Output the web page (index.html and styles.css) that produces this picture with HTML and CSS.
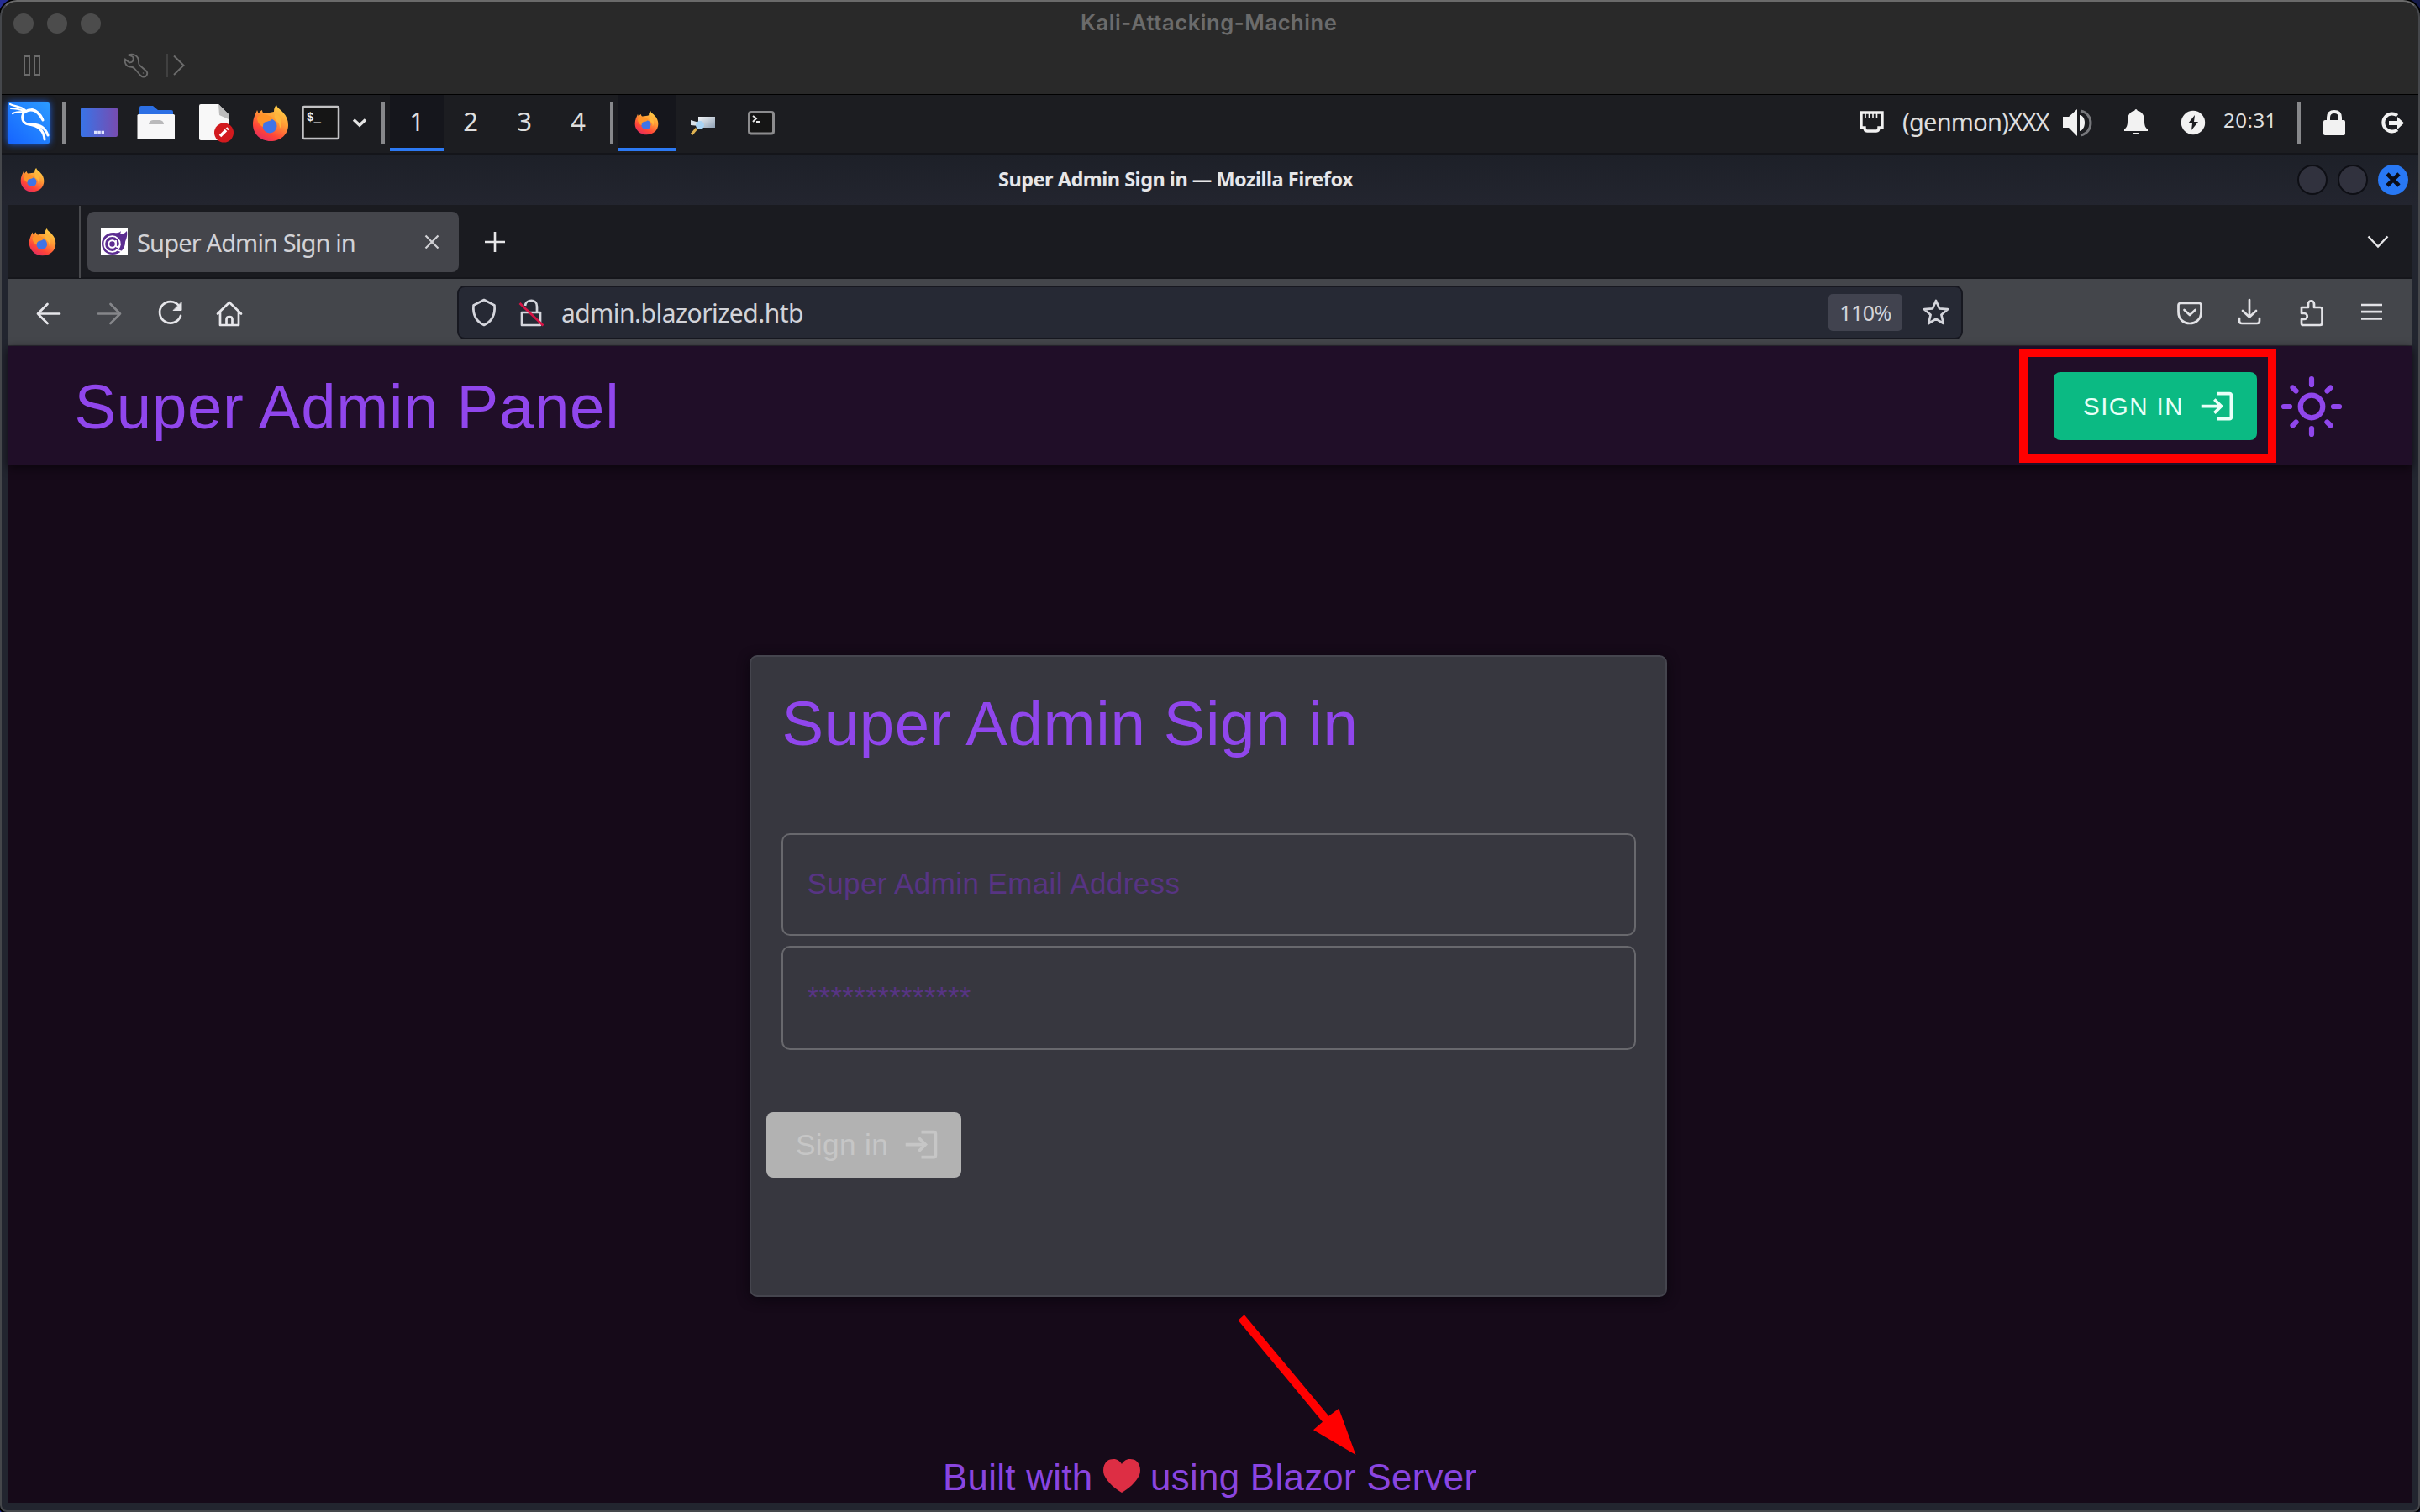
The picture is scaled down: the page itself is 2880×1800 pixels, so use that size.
FILE: index.html
```html
<!DOCTYPE html>
<html lang="en">
<head>
<meta charset="utf-8">
<title>Kali-Attacking-Machine</title>
<link rel="stylesheet" href="styles.css">
</head>
<body>
<svg class="defs" width="0" height="0" aria-hidden="true">
  <defs>
    <linearGradient id="ffBody" x1=".8" y1="0" x2=".25" y2="1">
      <stop offset="0" stop-color="#ffd84a"/><stop offset=".4" stop-color="#ff9a35"/><stop offset=".75" stop-color="#ff4438"/><stop offset="1" stop-color="#e02a63"/>
    </linearGradient>
    <linearGradient id="desk" x1="0" y1="0" x2="1" y2="0">
      <stop offset="0" stop-color="#3874e8"/><stop offset="1" stop-color="#774cb0"/>
    </linearGradient>
    <linearGradient id="kali" x1="0" y1="1" x2="1" y2="0">
      <stop offset="0" stop-color="#1664ff"/><stop offset="1" stop-color="#2b9bff"/>
    </linearGradient>
    <linearGradient id="cam" x1="0" y1="0" x2="1" y2="1">
      <stop offset="0" stop-color="#f2f5f8"/><stop offset="1" stop-color="#8fa1b5"/>
    </linearGradient>
    <symbol id="firefox" viewBox="0 0 44 44">
      <path fill="url(#ffBody)" d="M26 8C26 4 27 2 29 0c1 4 5 5 8 9 4 4 6 9 6 15 0 11-9 19-21 19S1 34 1 23C1 16 4 11 6 6c1 2 1 3 2 4 1-2 2-3 4-4 0 2 1 4 3 4 4-1 8-1 11-2z"/>
      <circle cx="21" cy="25" r="8.500" fill="#3f74e6"/>
      <path fill="#ff9428" d="M6 15c4-5 10-5 14-2l5 2c-2 4-5 4-8 5-3 0-4 3-4 6-4-2-7-6-7-11z"/>
      <path fill="#ffb73c" d="M28 9c7 5 9 12 5 19 0-4-1-7-4-9-3-3-3-7-1-10z"/>
    </symbol>
    <symbol id="login" viewBox="0 0 24 24">
      <path fill="currentColor" d="M11 7 9.600 8.400l2.600 2.600H2v2h10.200l-2.600 2.600L11 17l5-5zM20 19h-8v2h8c1.100 0 2-.9 2-2V5c0-1.100-.9-2-2-2h-8v2h8z"/>
    </symbol>
  </defs>
</svg>

<div class="window">
  <header class="mac">
    <div class="mac-title">
      <span class="dot"></span><span class="dot"></span><span class="dot"></span>
      <span class="mac-name">Kali-Attacking-Machine</span>
    </div>
    <svg class="mac-tools" width="240" height="54" viewBox="0 56 240 54" fill="none" stroke="#6b6b6b" stroke-width="2">
      <path d="M29 67h6v22h-6zM41 67h6v22h-6z"/>
      <path stroke-width="1.800" d="M153 65.500c5-2 12 0 12 8 0 2 0 3 1 4l8 7c3 3 0 8-4 7-1 0-2-1-3-2l-7-8c-2-2-3-2-5-2-5 0-7-5-6-9l5 4c4 0 6-3 4-7z"/>
      <circle cx="170.500" cy="87" r=".8" fill="#6b6b6b" stroke="none"/>
      <path stroke="#404040" d="M199 64v28"/>
      <path d="m207 66.500 11.500 11.200L207 89"/>
    </svg>
  </header>

  <nav class="panel">
    <svg class="logo" width="50" height="71" viewBox="9 113 50 71">
      <rect x="9" y="122" width="50" height="49" rx="2" fill="url(#kali)"/>
      <g fill="none" stroke="#fff" stroke-linecap="round">
        <path stroke-width="3" d="M30 133c8-5 15-1 21 10M29 133c-4 6-3 14 5 15 8 1 18 4 19 18M38 148c9 0 16 4 19 13"/>
        <path stroke-width="2.200" d="M12 124c6 3 12 2 18 7M13 129c5 0 10 1 16 3M15 135c4-2 8-2 13-2M38 130c6 1 10 5 13 12"/>
      </g>
    </svg>
    <span class="sep s1"></span>
    <svg class="i-desk" width="44" height="71" viewBox="96 113 44 71">
      <rect x="96" y="128" width="44" height="35" rx="2" fill="url(#desk)"/>
      <path d="M112 157.500h12" stroke="#dfe4ff" stroke-width="3.500" stroke-dasharray="3.500 .8"/>
    </svg>
    <svg class="i-folder" width="45" height="71" viewBox="163 113 45 71">
      <path fill="#2c6fe4" d="M166 139v-11q0-2 2-2h14l6 5h16q2 0 2 2v6z"/>
      <rect x="163.500" y="136" width="44.500" height="30" rx="1.500" fill="#f7f7f8"/>
      <path d="M177 148c1-5 3-5 9-5s8 0 9 5z" fill="#b9b9bb"/>
    </svg>
    <svg class="i-doc" width="42" height="71" viewBox="236 113 42 71">
      <path fill="#f8f8f8" d="M237 126q0-2 2-2h21l12 12v29q0 2-2 2h-31q-2 0-2-2z"/>
      <path fill="#bdbdbd" d="m260 124 12 12v6l-11-5z"/>
      <circle cx="266.500" cy="158" r="11.500" fill="#d21a1e"/>
      <path d="m262 162 7-7" stroke="#fff" stroke-width="3.600"/><path d="m270 154 1.500-1.500" stroke="#fff" stroke-width="3.600"/>
    </svg>
    <svg class="i-ff" width="44" height="71"><use href="#firefox" y="12" width="44" height="44"/></svg>
    <svg class="i-term" width="45" height="71" viewBox="359 113 45 71">
      <rect x="360.500" y="127" width="42.500" height="38" rx="1.500" fill="#151515" stroke="#c2c2c4" stroke-width="2.500"/>
      <text x="365" y="144" class="prompt">$_</text>
    </svg>
    <svg class="i-chev" width="18" height="71" viewBox="419 113 18 71"><path d="m421 142.500 7 6.500 7-6.500" fill="none" stroke="#e4e4e4" stroke-width="3.600"/></svg>
    <span class="sep s2"></span>
    <span class="ws active">1</span><span class="ws">2</span><span class="ws">3</span><span class="ws">4</span>
    <span class="sep s3"></span>
    <span class="task active"><svg width="30" height="71"><use href="#firefox" y="19" width="29" height="29"/></svg></span>
    <svg class="i-cam" width="34" height="71" viewBox="821 113 34 71">
      <rect x="831" y="139" width="20" height="13" fill="url(#cam)"/>
      <path fill="#d7e0e8" d="M822 143l10 3v4l-10-1z"/>
      <circle cx="833" cy="149" r="5" fill="#a9d3f4"/>
      <path d="m829 153-6 7" stroke="#e0b352" stroke-width="3.200"/>
    </svg>
    <svg class="i-term2" width="32" height="71" viewBox="890 113 32 71">
      <rect x="891.500" y="133.500" width="29" height="25.500" rx="2.500" fill="#151515" stroke="#8c8c8e" stroke-width="3"/>
      <path d="m896 138 4 3-4 4M900 145h5" fill="none" stroke="#e6e6e6" stroke-width="2"/>
    </svg>
    <svg class="i-eth" width="29" height="71" viewBox="2213 113 29 71">
      <path d="M2215 134h25v18h-4q0 4-3 4h-11q-3 0-3-4h-4z" fill="none" stroke="#f2f2f2" stroke-width="3.400"/>
      <path d="M2220 135v5M2224.500 135v5M2229 135v5M2233.500 135v5" stroke="#f2f2f2" stroke-width="1.600"/>
    </svg>
    <span class="genmon">(genmon)XXX</span>
    <svg class="i-vol" width="35" height="71" viewBox="2455 113 35 71">
      <path fill="#f2f2f2" d="M2455 139h7l10-9v32l-10-10h-7zM2475 137c8 1 8 17 0 19z"/>
      <path d="M2476 132c16 3 16 26 0 29" fill="none" stroke="#77787c" stroke-width="3"/>
    </svg>
    <svg class="i-bell" width="28" height="71" viewBox="2528 113 28 71">
      <path fill="#f2f2f2" d="M2540 132q2-4 4 0c6 1 8 6 8 12 0 5 1 8 4 10v2h-28v-2c3-2 4-5 4-10 0-6 2-11 8-12zM2538 158h8q-4 4-8 0z"/>
    </svg>
    <svg class="i-pow" width="28" height="71" viewBox="2596 113 28 71">
      <circle cx="2610" cy="146" r="14.200" fill="#f2f2f2"/><path fill="#1b1c20" d="m2612 137-8 10h5l-1 8 8-10h-5z"/>
    </svg>
    <span class="clock">20:31</span>
    <span class="sep s4"></span>
    <svg class="i-lock" width="26" height="71" viewBox="2765 113 26 71">
      <rect x="2765" y="143" width="26" height="18" rx="2" fill="#f2f2f2"/><path d="M2771 144v-4q0-7 7-7t7 7v4" fill="none" stroke="#f2f2f2" stroke-width="4"/>
    </svg>
    <svg class="i-out" width="30" height="71" viewBox="2833 113 30 71">
      <path d="M2854 137.500a10.500 10.500 0 1 0 0 17" fill="none" stroke="#f2f2f2" stroke-width="4"/><path fill="#f2f2f2" d="M2844 144h10v-5l8 7.500-8 7.500v-5h-10z"/>
    </svg>
  </nav>

  <section class="browser">
    <div class="titlebar">
      <svg class="tb-ff" width="29" height="60"><use href="#firefox" y="16" width="29" height="29"/></svg>
      <span class="tb-text">Super Admin Sign in — Mozilla Firefox</span>
      <span class="wbtn"></span><span class="wbtn"></span>
      <span class="wbtn close"><svg width="18" height="18"><path d="m2 2 14 14M16 2 2 16" stroke="#0a0d18" stroke-width="4.600"/></svg></span>
    </div>

    <div class="content">
      <div class="tabs">
        <span class="pin"><svg width="33" height="88"><use href="#firefox" y="27" width="33" height="33"/></svg></span>
        <div class="tab">
          <svg class="favicon" width="32" height="32" viewBox="0 0 32 32">
            <path fill="#fff" d="M0 0h32v32H0z"/>
            <path fill="#5c2d91" d="M31 3c1 6-1 10-2 13 0 9-7 15-15 15C6 31 1 25 1 18 1 10 8 4 16 5c5 1 7-1 8-2l-1 4c3 0 5-1 8-4z"/>
            <circle cx="13.500" cy="18.500" r="9.300" fill="none" stroke="#fff" stroke-width="1.800"/>
            <circle cx="13.500" cy="18.500" r="4.200" fill="none" stroke="#fff" stroke-width="2"/>
            <path d="M18 14v7q3 3 5-2M18 25l8 3" fill="none" stroke="#fff" stroke-width="1.800"/>
          </svg>
          <span class="tab-text">Super Admin Sign in</span>
          <svg class="tab-x" width="18" height="18"><path d="m1.500 1.500 15 15M16.500 1.500l-15 15" stroke="#d2d2d6" stroke-width="2.200"/></svg>
        </div>
        <svg class="plus" width="24" height="26"><path d="M0 13h24M12 1v24" stroke="#e6e6e8" stroke-width="2.600"/></svg>
        <svg class="tabs-chev" width="26" height="16"><path d="m1.500 1.500 11.500 12 11.500-12" fill="none" stroke="#e6e6e8" stroke-width="2.400"/></svg>
      </div>

      <div class="toolbar">
        <svg class="nav-ico" width="250" height="80" viewBox="40 332 250 80" fill="none" stroke="#e6e6ea" stroke-width="2.700" stroke-linecap="round" stroke-linejoin="round">
          <path d="M71 373.500H45M56.500 362 45 373.500 56.500 385"/>
          <path stroke="#85868a" d="M117 373.500h26M131.500 362l11.500 11.500-11.500 11.500"/>
          <path d="M213 364a12.800 12.800 0 1 0 2 12"/><path fill="#e6e6ea" stroke-width="1" d="M216 360v9.500h-9.500z"/>
          <path d="M259 373.500 273 360l14 13.500M262 372v15h22v-15M269.500 387v-7q0-3 3.500-3t3.500 3v7"/>
        </svg>
        <div class="url">
          <svg class="url-ico" width="90" height="60" viewBox="560 342 90 60" fill="none" stroke="#d4d5dc" stroke-width="2.700" stroke-linejoin="round">
            <path d="M576 357l12.500 6.500c1 11-3 19-12.500 23.500-9.500-4.500-13.500-12.500-12.500-23.500z"/>
            <path d="M621 372h22v15h-22zM625 364c1-8 14-9 14 1v7"/>
            <path d="m618.500 361 28 26.500" stroke="#d71345"/>
          </svg>
          <span class="url-text">admin.blazorized.htb</span>
          <span class="zoom">110%</span>
          <svg class="star" width="34" height="34" viewBox="0 0 34 34"><path d="m17 3 4 9.300 10 .9-7.600 6.600 2.400 10.200-8.800-5.400L8.200 30l2.400-10.200L3 13.200l10-.9z" fill="none" stroke="#d4d5dc" stroke-width="2.700" stroke-linejoin="round"/></svg>
        </div>
        <svg class="right-ico" width="250" height="80" viewBox="2590 332 250 80" fill="none" stroke="#e2e2e6" stroke-width="2.700" stroke-linejoin="round" stroke-linecap="round">
          <path d="M2595 361h22q2.500 0 2.500 2.500v8c0 18-27 18-27 0v-8q0-2.500 2.500-2.500zM2599.500 369l6.500 6 6.500-6"/>
          <path d="M2677 357v20M2669 370l8 7.500 8-7.500M2665 379v3q0 3 3 3h18q3 0 3-3v-3"/>
          <path d="M2739 366h8v-4c0-5 7-5 7 0v4h7q2.500 0 2.500 2.500v16q0 2.500-2.500 2.500h-20q-2 0-2-2v-5h3c5 0 5-7 0-7h-3z"/>
          <path stroke-linecap="butt" d="M2810 363h25M2810 371.200h25M2810 379.500h25"/>
        </svg>
      </div>

      <div class="page">
        <div class="appbar">
          <h1 class="brand">Super Admin Panel</h1>
          <button class="signin-top"><span class="signin-label">SIGN IN</span><svg width="45" height="45"><use href="#login"/></svg></button>
          <svg class="sun" width="74" height="74" viewBox="-37 -37 74 74" fill="none" stroke="#9046ec" stroke-width="6.200" stroke-linecap="round">
            <circle r="13.300"/>
            <path d="M0-33v7M0 26v7M-33 0h7M26 0h7M-22.500-22.500l4 4M22.500-22.500l-4 4M-22.500 22.500l4-4M22.500 22.500l-4-4"/>
          </svg>
        </div>
        <main class="main">
          <div class="card">
            <h2 class="card-title">Super Admin Sign in</h2>
            <div class="field email">Super Admin Email Address</div>
            <div class="field pass">**************</div>
            <button class="signin" disabled>Sign in<svg width="45" height="45"><use href="#login"/></svg></button>
          </div>
          <footer class="footer">
            <span class="built">Built with</span>
            <svg class="heart" width="44" height="40" viewBox="0 0 44 40"><path fill="#dd2e44" d="M22 6C26-1 34-1 39 2c5 4 6 11 4 17-4 9-14 17-21 21C15 36 5 28 1 19-1 13 0 6 5 2c5-3 13-3 17 4z"/></svg>
            <span>using Blazor Server</span>
          </footer>
        </main>
      </div>
    </div>
  </section>
  <div class="callout"></div>
  <svg class="arrow" width="142" height="168" viewBox="1473 1565 142 168"><path fill="#f00" d="m1473.500 1571.700 7.300-6.400 100.600 120.400 11.900-9 20.200 55.300-50.500-29.700 11-9.600z"/></svg>
</div>
</body>
</html>
```

FILE: styles.css
```css
* { box-sizing: border-box; }
body { margin: 0; background: linear-gradient(90deg, #262d94 0 50%, #141a4a 50%); }
svg { flex: none; display: block; }
.defs { position: absolute; }
.window {
  position: relative;
  width: 2880px;
  height: 1800px;
  overflow: hidden;
  border-radius: 20px 20px 8px 8px;
  background: #22252f;
  display: flex;
  flex-direction: column;
  box-shadow: 0 0 0 2px #000;
}
.window::after {
  content: "";
  position: absolute;
  inset: 0;
  border: 2px solid #45474b;
  border-top-color: #6a6a6a;
  border-radius: inherit;
}

/* host window bar */
.mac { height: 113px; background: #292929; border-bottom: 1px solid #000; flex: none; }
.mac-title { height: 56px; display: flex; align-items: center; gap: 16px; padding-left: 16px; }
.dot { width: 24px; height: 24px; border-radius: 50%; background: #4c4c4c; }
.mac-name {
  margin-left: 1150px;
  height: 56px;
  font: 600 25.500px/54px Inter, sans-serif;
  letter-spacing: .6px;
  color: #6b6b6b;
  white-space: nowrap;
}

/* desktop panel */
.panel {
  height: 71px;
  flex: none;
  display: flex;
  background: #1c1d21;
  border-bottom: 2px solid #14151a;
  font-family: "Noto Sans", sans-serif;
  color: #dedede;
  padding-left: 9px;
}
.panel > svg { overflow: visible; }
.logo { filter: drop-shadow(0 0 4px #1c6bff); }
.sep { width: 4px; height: 50px; margin-top: 9px; background: #87888b; flex: none; }
.s1 { margin-left: 15px; }
.i-desk { margin-left: 18px; }
.i-folder { margin-left: 23px; }
.i-doc { margin-left: 28px; }
.i-ff { margin-left: 22px; }
.i-term { margin-left: 15px; }
.prompt { font: bold 14px "Liberation Mono", monospace; fill: #eee; }
.i-chev { margin-left: 15px; }
.s2 { margin-left: 17px; }
.ws { width: 64px; height: 67px; font-size: 31px; line-height: 62px; text-align: center; flex: none; }
.ws.active { margin-left: 6px; }
.active { background: #15161c; border-bottom: 4px solid #2c79f3; }
.s3 { margin-left: 6px; }
.task { width: 68px; height: 67px; margin-left: 6px; padding-left: 19px; flex: none; }
.i-cam { margin-left: 17px; }
.i-term2 { margin-left: 35px; }
.i-eth { margin-left: 1291px; }
.genmon { width: 178px; margin-left: 22px; font-size: 29px; letter-spacing: -.75px; line-height: 63px; white-space: nowrap; flex: none; }
.i-vol { margin-left: 13px; }
.i-bell { margin-left: 38px; }
.i-pow { margin-left: 40px; }
.clock { width: 66px; margin-left: 22px; font-size: 24px; line-height: 60px; letter-spacing: .5px; white-space: nowrap; flex: none; }
.s4 { margin-left: 22px; }
.i-lock { margin-left: 27px; }
.i-out { margin-left: 41px; }

/* browser window */
.browser { flex: 1; display: flex; flex-direction: column; font-family: "Noto Sans", sans-serif; }
.titlebar {
  height: 60px;
  display: flex;
  align-items: center;
  padding-left: 24px;
  background: linear-gradient(#1d2028, #23252f);
}
.tb-text { width: 430px; margin-left: 1135px; font-size: 23.500px; font-weight: 700; letter-spacing: -.5px; line-height: 58px; color: #e6e6e8; white-space: nowrap; height: 60px; }
.wbtn { width: 36px; height: 36px; border-radius: 50%; background: #31323e; border: 2px solid #0e0f15; margin-left: 12px; display: flex; align-items: center; justify-content: center; }
.tb-text + .wbtn { margin-left: 1116px; }
.wbtn.close { background: #2878f4; border: 0; }

.content { width: 2860px; margin-left: 10px; display: flex; flex-direction: column; height: 1545px; }
.tabs { height: 88px; background: #1a1b20; border-bottom: 2px solid #15161b; display: flex; align-items: center; padding-top: 2px; }
.pin { width: 86px; height: 86px; border-right: 2px solid #48494d; padding-left: 24px; }
.tab { width: 442px; height: 72px; margin-left: 8px; border-radius: 8px; background: #44454b; display: flex; align-items: center; padding-left: 16px; }
.tab-text { width: 270px; height: 72px; margin-left: 11px; font-size: 29px; letter-spacing: -.85px; line-height: 73px; color: #d2d2d6; white-space: nowrap; }
.tab-x { margin-left: 72px; }
.plus { margin-left: 31px; }
.tabs-chev { margin-left: 2216px; }

.toolbar { height: 80px; background: #44464b; border-bottom: 1px solid #2c2d33; display: flex; align-items: center; }
.nav-ico { margin-left: 30px; }
.url { width: 1792px; height: 64px; margin-left: 254px; border: 2px solid #171820; border-radius: 9px; background: #262934; display: flex; align-items: center; padding-left: 14px; }
.url-text { width: 1400px; height: 60px; margin-left: 18px; font-size: 30px; letter-spacing: -.52px; line-height: 61px; color: #d2d3d9; white-space: nowrap; }
.zoom { width: 88px; height: 44px; margin-left: 108px; border-radius: 5px; background: #41434f; font-size: 25px; letter-spacing: -.5px; line-height: 45px; text-align: center; color: #d2d3d9; }
.star { margin-left: 23px; }
.right-ico { margin-left: 254px; }

/* web page */
.page { height: 1377px; background: #160a19; font-family: "Liberation Sans", Arial, sans-serif; color: #9046ec; }
.appbar { height: 141px; background: #200e28; box-shadow: 0 4px 10px #0b050d; display: flex; align-items: center; padding-left: 78.500px; }
.brand { width: 2355.500px; height: 141px; margin: 0; font-size: 74.400px; font-weight: 400; line-height: 146px; letter-spacing: .0095em; white-space: nowrap; }
.signin-top, .signin { font-family: inherit; border: 0; border-radius: 8px; display: flex; align-items: center; white-space: nowrap; padding: 0; flex: none; }
.signin-top { width: 242px; height: 81px; margin-top: 2px; background: #0bba83; color: #e9fff8; padding-left: 35px; }
.signin-label { width: 137px; font-size: 29.500px; letter-spacing: 1.450px; text-align: left; }
.sun { margin-left: 28px; margin-top: 2px; }
.main { display: flex; flex-direction: column; align-items: flex-start; }
.card { width: 1092px; height: 764px; margin: 227px 0 0 882px; background: #37373f; border: 2px solid #45454e; border-radius: 9px; box-shadow: 0 3px 14px #0b060f; }
.card-title { margin: 0 0 50px 36.500px; font-size: 74.400px; font-weight: 400; line-height: 160px; letter-spacing: .0085em; white-space: nowrap; }
.field { width: 1017px; margin-left: 36px; padding-left: 28.500px; border: 2px solid #68686d; border-radius: 10px; font-size: 35px; letter-spacing: .0115em; color: #573483; }
.email { height: 122px; line-height: 116px; }
.pass { height: 124px; line-height: 118px; margin-top: 12px; letter-spacing: .00938em; }
.signin { width: 232px; height: 78px; margin: 74px 0 0 18px; background: #b2b2b2; color: #c6c6c6; font-size: 35.200px; letter-spacing: .01em; padding: 0 0 1px 35px; gap: 17px; }
.footer { display: flex; height: 50px; margin: 190px 0 0 1112px; font-size: 43.800px; line-height: 50px; letter-spacing: .0075em; white-space: nowrap; color: #8a45e0; }
.built { width: 191px; }
.heart { margin-right: 12px; margin-top: 3px; }

/* annotations */
.callout { position: absolute; left: 2403px; top: 415px; width: 306px; height: 136px; border: 10px solid #f00; }
.arrow { position: absolute; left: 1473px; top: 1565px; }
```
